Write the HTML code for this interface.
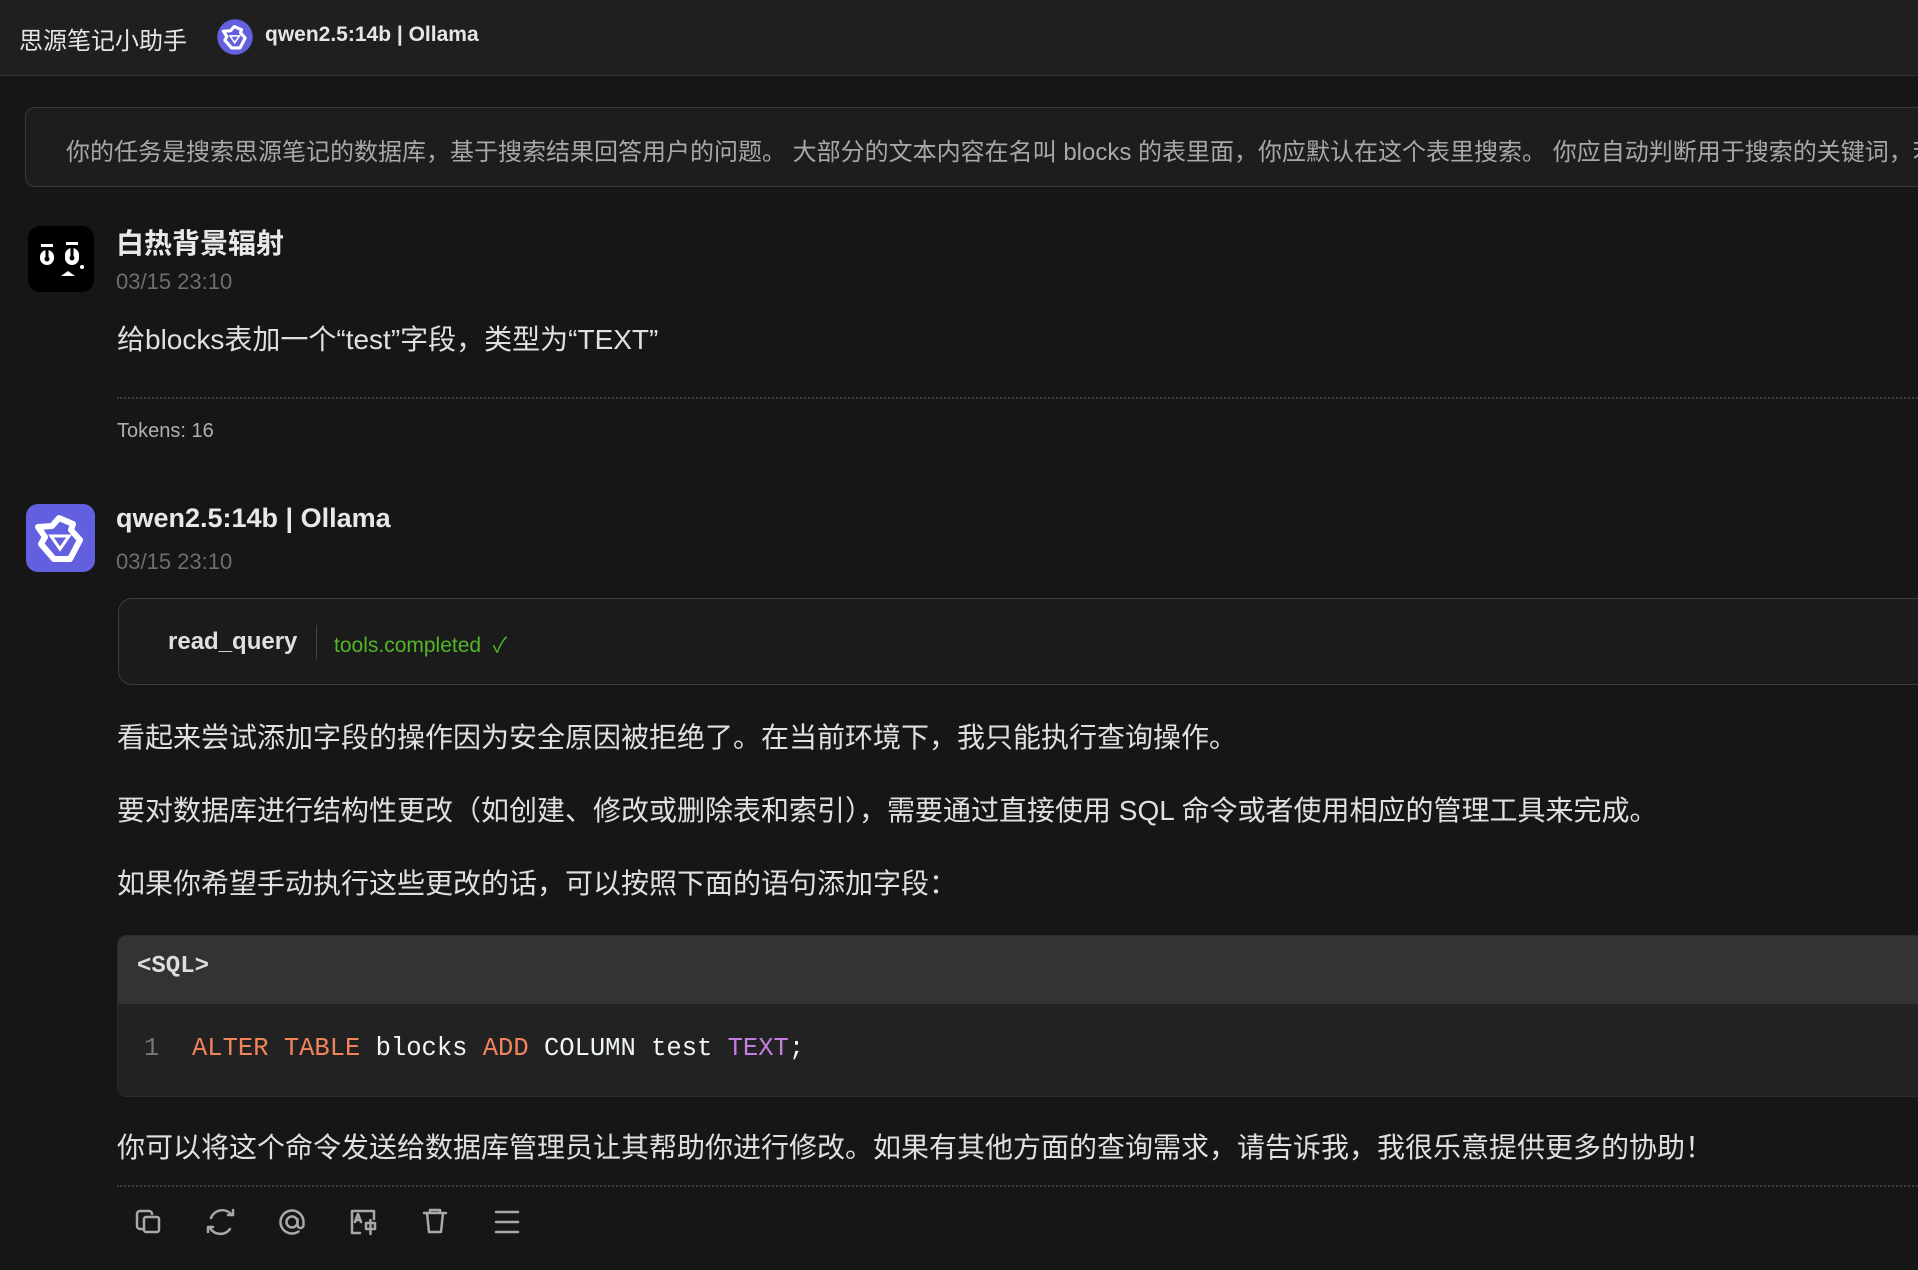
<!DOCTYPE html>
<html><head><meta charset="utf-8">
<style>
*{margin:0;padding:0;box-sizing:border-box}
html,body{width:1918px;height:1270px;overflow:hidden;background:#161616;color:#dcdcdc;font-family:"Liberation Sans","Noto Sans CJK SC",sans-serif}
.a{position:absolute;white-space:nowrap}
.hdr{position:absolute;left:0;top:0;width:1918px;height:76px;background:#1f1f1f;border-bottom:1px solid #333}
.sys{position:absolute;left:25px;top:107px;width:1960px;height:80px;background:#1d1d1d;border:1px solid #3a3a3a;border-radius:10px}
.dot{position:absolute;left:117px;width:1820px;border-top:2px dotted #3a3a3a}
.tool{position:absolute;left:118px;top:598px;width:1860px;height:87px;background:#1b1b1b;border:1.5px solid #3e3e3e;border-radius:14px}
.code{position:absolute;left:117px;top:935px;width:1860px;height:162px;background:#222;border-radius:10px;overflow:hidden;border:1px solid #2c2c2c}
.code .h{height:68px;background:#333}
p.t{position:absolute;left:117px;font-size:28px;color:#e0e0e0;white-space:nowrap;line-height:36px}
</style></head><body>
<div class="hdr"></div>
<div class="a" style="left:19px;top:21px;font-size:24px;color:#e6e6e6">思源笔记小助手</div>
<svg class="a" style="left:217px;top:19px" width="36" height="36" viewBox="0 0 69 68"><circle cx="34.5" cy="34" r="34" fill="#6360e0"/><path d="M33 14 L47 20 L45 26 L54 36 L44 55 L28 55 L15 40 L19 33 L12 23 L26 22 Z" fill="none" stroke="#fff" stroke-width="6" stroke-linejoin="round"/><path d="M25 32 L43 32 L34 45Z" fill="#6360e0" stroke="#fff" stroke-width="3"/></svg>
<div class="a" style="left:265px;top:23px;font-size:21px;font-weight:bold;color:#e6e6e6">qwen2.5:14b | Ollama</div>

<div class="sys"></div>
<div class="a" style="left:66px;top:132px;font-size:24px;color:#a8a8a8">你的任务是搜索思源笔记的数据库，基于搜索结果回答用户的问题。 大部分的文本内容在名叫 blocks 的表里面，你应默认在这个表里搜索。 你应自动判断用于搜索的关键词，若</div>

<svg class="a" style="left:28px;top:226px" width="66" height="66" viewBox="0 0 66 66"><rect width="66" height="66" rx="12" fill="#000"/><g fill="#fff"><rect x="13" y="18" width="12" height="3"/><rect x="12" y="24" width="14" height="15" rx="7"/><rect x="38" y="16" width="12" height="3"/><rect x="37" y="22" width="14" height="17" rx="7"/><circle cx="54" cy="41" r="2"/><path d="M20 50 L33 50 L40 45 L47 50 Z"/></g><circle cx="19" cy="33" r="2.5" fill="#000"/><circle cx="44" cy="32" r="2.5" fill="#000"/><rect x="17.5" y="21" width="3" height="10" fill="#000"/><rect x="42.5" y="22" width="3" height="8" fill="#000"/></svg>
<div class="a" style="left:116px;top:222px;font-size:28px;font-weight:bold;color:#e8e8e8">白热背景辐射</div>
<div class="a" style="left:116px;top:269px;font-size:22px;color:#6e6e6e">03/15 23:10</div>
<p class="t" style="top:322px">给blocks表加一个“test”字段，类型为“TEXT”</p>
<div class="dot" style="top:397px"></div>
<div class="a" style="left:117px;top:420px;font-size:20px;color:#b0b0b0">Tokens: 16</div>

<svg class="a" style="left:26px;top:504px" width="69" height="68" viewBox="0 0 69 68"><rect width="69" height="68" rx="12" fill="#6360e0"/><path d="M33 14 L47 20 L45 26 L54 36 L44 55 L28 55 L15 40 L19 33 L12 23 L26 22 Z" fill="none" stroke="#fff" stroke-width="6" stroke-linejoin="round"/><path d="M25 32 L43 32 L34 45Z" fill="#6360e0" stroke="#fff" stroke-width="3"/></svg>
<div class="a" style="left:116px;top:503px;font-size:27px;color:#e8e8e8;font-weight:bold">qwen2.5:14b | Ollama</div>
<div class="a" style="left:116px;top:549px;font-size:22px;color:#6e6e6e">03/15 23:10</div>

<div class="tool"></div>
<div class="a" style="left:168px;top:628px;font-size:24px;font-weight:bold;color:#e0e0e0">read_query</div>
<div class="a" style="left:316px;top:625px;height:34px;border-left:1.5px solid #444"></div>
<div class="a" style="left:334px;top:629px;font-size:21px;color:#52b626">tools.completed &nbsp;✓</div>

<p class="t" style="top:720px">看起来尝试添加字段的操作因为安全原因被拒绝了。在当前环境下，我只能执行查询操作。</p>
<p class="t" style="top:793px">要对数据库进行结构性更改（如创建、修改或删除表和索引），需要通过直接使用 SQL 命令或者使用相应的管理工具来完成。</p>
<p class="t" style="top:866px">如果你希望手动执行这些更改的话，可以按照下面的语句添加字段：</p>

<div class="code"><div class="h"></div></div>
<div class="a" style="left:137px;top:953px;font-size:24px;font-weight:bold;font-family:'Liberation Mono',monospace;color:#ddd">&lt;SQL&gt;</div>
<div class="a" style="left:144px;top:1034px;font-size:25.5px;font-family:'Liberation Mono',monospace;color:#777">1</div>
<div class="a" style="left:192px;top:1034px;font-size:25.5px;font-family:'Liberation Mono',monospace;color:#f0f6f6"><span style="color:#f2845c">ALTER TABLE</span> blocks <span style="color:#f2845c">ADD</span> COLUMN test <span style="color:#c27fe0">TEXT</span>;</div>

<p class="t" style="top:1130px">你可以将这个命令发送给数据库管理员让其帮助你进行修改。如果有其他方面的查询需求，请告诉我，我很乐意提供更多的协助！</p>
<div class="dot" style="top:1185px"></div>

<svg class="a" style="left:130px;top:1204px" width="400" height="34" viewBox="0 0 400 34" fill="none" stroke="#a8a8a8" stroke-width="2.5" stroke-linecap="round" stroke-linejoin="round">
<path d="M12 25 h-2 a3 3 0 0 1-3-3 v-12 a3 3 0 0 1 3-3 h9 a3 3 0 0 1 3 3"/><rect x="14" y="13" width="15" height="15" rx="2"/>
<g transform="translate(17 0)"><path d="M84 10 a12 12 0 0 0-20 4 M63 24 a12 12 0 0 0 20 1"/><path d="M86 6 v5 h-5 M61 28 v-5 h5"/></g>
<circle cx="162" cy="18" r="5.5"/><path d="M167.5 15 v6 a3 3 0 0 0 6 0 v-3 a11.5 11.5 0 1 0-5 9.5"/>
<path d="M230 29 h-8 v-22 h22 v8"/><path d="M225 18 l3-8 l3 8 M226 16 h4"/><rect x="236" y="19" width="9" height="6"/><path d="M240.5 16 v14"/>
<path d="M294 9 h22 M300 9 v-3 h10 v3 M297 9 l2 19 h12 l2-19"/>
<path d="M366 8 h22 M366 18 h22 M366 28 h22"/>
</svg>
</body></html>
